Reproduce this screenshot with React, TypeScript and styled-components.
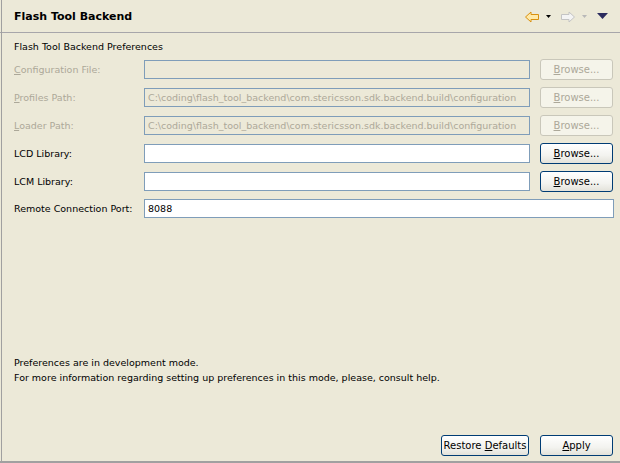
import React from "react";
import styled, { createGlobalStyle } from "styled-components";

const Global = createGlobalStyle`
  html, body { margin: 0; padding: 0; background: #ECE9D8; }
  body { font-family: "DejaVu Sans", sans-serif; font-size: 9.5px; color: #000; }
`;

const Frame = styled.div`
  width: 620px;
  height: 463px;
  box-sizing: border-box;
  background: #ECE9D8;
  display: flex;
  flex-direction: column;
  position: relative;
  &::before {
    content: "";
    position: absolute;
    left: 1px;
    top: 0;
    bottom: 0;
    width: 1px;
    background: #A0A0A0;
  }
`;

const Header = styled.div`
  height: 33px;
  box-sizing: border-box;
  border-bottom: 1px solid #A7A6AA;
  display: flex;
  align-items: center;
  padding: 1px 12px 0 14px;
`;

const Title = styled.div`
  font-family: "DejaVu Sans", sans-serif;
  font-weight: bold;
  font-size: 11px;
  flex: 1;
`;

const Tools = styled.div`
  display: flex;
  align-items: center;
`;

const Body = styled.div`
  flex: 1;
  display: flex;
  flex-direction: column;
  padding: 7px 7px 0 14px;
  font-family: "DejaVu Sans", sans-serif;
  font-size: 9.5px;
`;

const Heading = styled.div`
  height: 14px;
  line-height: 14px;
  margin-bottom: 5px;
`;

const Grid = styled.div`
  display: grid;
  grid-template-columns: 120px 386px 73px;
  column-gap: 10px;
  row-gap: 7px;
  align-items: center;
`;

const Label = styled.div<{ $disabled?: boolean }>`
  color: ${(p) => (p.$disabled ? "#ACA899" : "#000")};
  white-space: nowrap;
`;

const Field = styled.div<{ $disabled?: boolean; $wide?: boolean }>`
  height: 19px;
  box-sizing: border-box;
  border: 1px solid #7F9DB9;
  background: ${(p) => (p.$disabled ? "#ECE9D8" : "#FFF")};
  color: ${(p) => (p.$disabled ? "#ACA899" : "#000")};
  padding: 0 3px;
  line-height: 17px;
  white-space: nowrap;
  overflow: hidden;
  grid-column: ${(p) => (p.$wide ? "2 / span 2" : "auto")};
  margin-right: ${(p) => (p.$wide ? "-1px" : "0")};
`;

const Button = styled.div<{ $disabled?: boolean; $w?: number }>`
  width: ${(p) => p.$w ?? 73}px;
  height: 21px;
  box-sizing: border-box;
  border: 1px solid ${(p) => (p.$disabled ? "#C9C7BA" : "#003C74")};
  border-radius: 3px;
  background: ${(p) =>
    p.$disabled ? "#F5F4EA" : "linear-gradient(#FFFFFF, #F3F3EF 60%, #E3E2DA)"};
  color: ${(p) => (p.$disabled ? "#ACA899" : "#000")};
  display: flex;
  align-items: center;
  justify-content: center;
  white-space: nowrap;
  font-size: 10px;
`;

const U = styled.span`
  text-decoration: underline;
`;

const Spacer = styled.div`
  flex: 1;
`;

const Note = styled.div`
  line-height: 15px;
  margin-bottom: 50px;
`;

const Footer = styled.div`
  display: flex;
  justify-content: flex-end;
  gap: 11px;
  padding-bottom: 5px;
`;

const BottomLine = styled.div`
  height: 2px;
  background: #A0A0A0;
`;

const BackIcon = () => (
  <svg width="16" height="16" viewBox="0 0 16 16">
    <path d="M1.5 8 L7 3 V5.5 H14.5 V10.5 H7 V13 Z" fill="#FFE9A8" stroke="#D9900F" strokeWidth="1" />
  </svg>
);
const FwdIcon = () => (
  <svg width="16" height="16" viewBox="0 0 16 16">
    <path d="M14.5 8 L9 3 V5.5 H1.5 V10.5 H9 V13 Z" fill="#F4F4F4" stroke="#C4C4C4" strokeWidth="1" />
  </svg>
);
const Drop = ({ color }: { color: string }) => (
  <svg width="7" height="4" viewBox="0 0 7 4">
    <path d="M0 0 H5 L2.5 3 Z" fill={color} />
  </svg>
);
const ViewMenu = () => (
  <svg width="11" height="7" viewBox="0 0 11 7">
    <path d="M0 0 H11 L5.5 6 Z" fill="#2C2C5E" />
  </svg>
);

const ToolGap = styled.span<{ $w: number }>`
  display: inline-block;
  width: ${(p) => p.$w}px;
`;

export default function App() {
  return (
    <>
      <Global />
      <Frame>
        <Header>
          <Title>Flash Tool Backend</Title>
          <Tools>
            <BackIcon />
            <ToolGap $w={6} />
            <Drop color="#000" />
            <ToolGap $w={7} />
            <FwdIcon />
            <ToolGap $w={6} />
            <Drop color="#B8B8B8" />
            <ToolGap $w={8} />
            <ViewMenu />
          </Tools>
        </Header>
        <Body>
          <Heading>Flash Tool Backend Preferences</Heading>
          <Grid>
            <Label $disabled><U>C</U>onfiguration File:</Label>
            <Field $disabled />
            <Button $disabled><span><U>B</U>rowse...</span></Button>

            <Label $disabled><U>P</U>rofiles Path:</Label>
            <Field $disabled>C:\coding\flash_tool_backend\com.stericsson.sdk.backend.build\configuration</Field>
            <Button $disabled><span><U>B</U>rowse...</span></Button>

            <Label $disabled><U>L</U>oader Path:</Label>
            <Field $disabled>C:\coding\flash_tool_backend\com.stericsson.sdk.backend.build\configuration</Field>
            <Button $disabled><span><U>B</U>rowse...</span></Button>

            <Label>LCD Library:</Label>
            <Field />
            <Button><span><U>B</U>rowse...</span></Button>

            <Label>LCM Library:</Label>
            <Field />
            <Button><span><U>B</U>rowse...</span></Button>

            <Label>Remote Connection Port:</Label>
            <Field $wide>8088</Field>
          </Grid>
          <Spacer />
          <Note>
            Preferences are in development mode.
            <br />
            For more information regarding setting up preferences in this mode, please, consult help.
          </Note>
          <Footer>
            <Button $w={88}><span>Restore <U>D</U>efaults</span></Button>
            <Button><span><U>A</U>pply</span></Button>
          </Footer>
        </Body>
        <BottomLine />
      </Frame>
    </>
  );
}
